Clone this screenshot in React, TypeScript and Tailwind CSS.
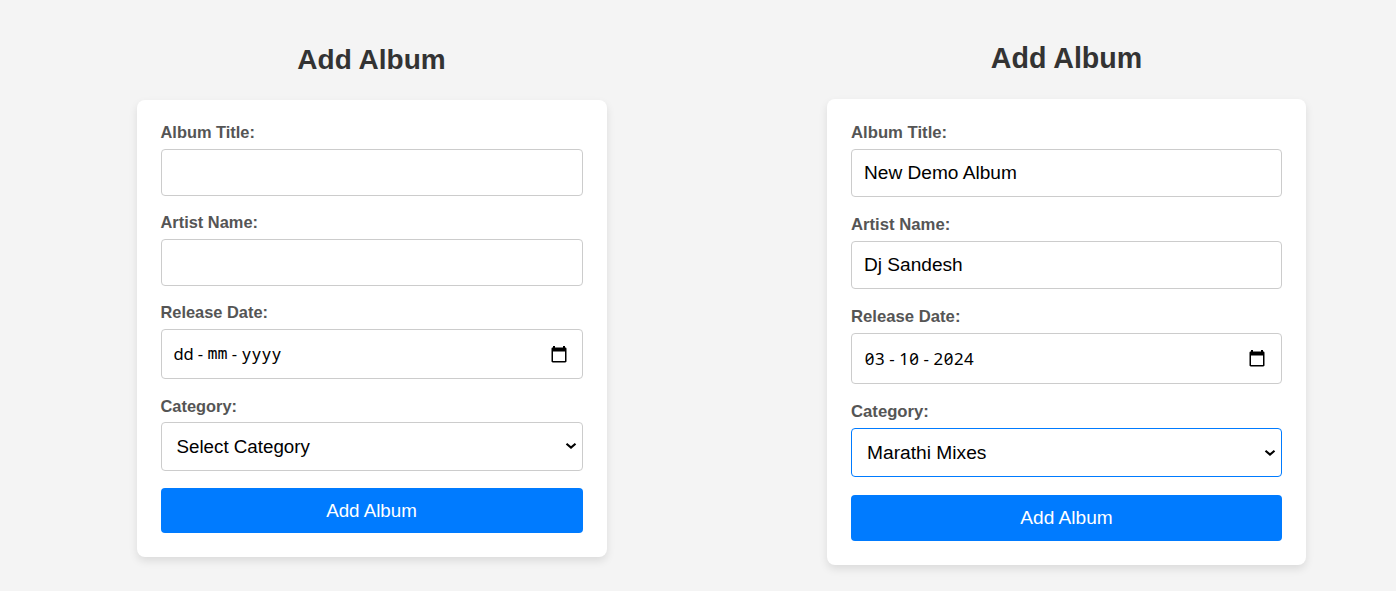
import type { ReactNode } from 'react';

function CalendarIcon() {
  return (
    <svg viewBox="0 0 16 17" className="h-[17px] w-4 shrink-0" fill="none">
      <path d="M2 0h2v1.500h8V0h2v1.500h.2c.8 0 1.300.5 1.300 1.300v12.400c0 .7-.5 1.200-1.300 1.200H1.800c-.8 0-1.300-.5-1.300-1.200V2.800C.5 2 1 1.500 1.800 1.500H2V0Zm0 5.500v9.500h12V5.500H2Z" fill="#000" />
    </svg>
  );
}

function ChevronIcon() {
  return (
    <svg viewBox="0 0 12 8" className="h-2 w-3 shrink-0" fill="none">
      <path d="M1.500 1.700 6 5.600l4.500-3.900" stroke="#000" strokeWidth="2.100" />
    </svg>
  );
}

function DateText({ parts, className, cell }: { parts: string[]; className: string; cell: string }) {
  return (
    <span className={`flex font-['Noto_Sans',sans-serif] [font-feature-settings:'zero'_1] ${className}`}>
      {parts.map((part, i) => (
        <span key={i} className="flex">
          {i > 0 && <span className="w-[14px] text-center">-</span>}
          {[...part].map((ch, j) => (
            <span key={j} className={`flex justify-center ${cell}`}>
              <span className={ch === 'm' ? "font-['DejaVu_Sans_Mono',monospace]" : ''}>{ch}</span>
            </span>
          ))}
        </span>
      ))}
    </span>
  );
}

function Label({ children, className }: { children: ReactNode; className: string }) {
  return <label className={`block font-bold text-[#555] ${className}`}>{children}</label>;
}

const box = 'flex w-full items-center rounded-[4px] border bg-white text-black outline-none';

function EmptyForm() {
  return (
    <section className="ml-[136.500px] w-[470px] shrink-0 pt-[42px]">
      <h1 className="h-[58px] text-center text-[28px] leading-[36px] font-bold text-[#333]">Add Album</h1>
      <form className="flex h-[457px] flex-col rounded-[8px] bg-white px-6 pt-[22px] shadow-[0_4px_8px_rgba(0,0,0,0.1)]">
        <Label className="h-[27px] text-[16.400px] leading-[20px]">Album Title:</Label>
        <input type="text" className={`${box} h-[47px] border-[#ccc] px-3 text-[18.750px]`} />
        <Label className="mt-4 h-[27px] text-[16.400px] leading-[20px]">Artist Name:</Label>
        <input type="text" className={`${box} h-[47px] border-[#ccc] px-3 text-[18.750px]`} />
        <Label className="mt-4 h-[27px] text-[16.400px] leading-[20px]">Release Date:</Label>
        <div className={`${box} h-[50px] justify-between border-[#ccc] pr-[15px] pl-3`}>
          <DateText parts={['dd', 'mm', 'yyyy']} className="pt-px text-[16.600px]" cell="w-[10px]" />
          <CalendarIcon />
        </div>
        <Label className="mt-[17px] h-[26px] text-[16.400px] leading-[20px]">Category:</Label>
        <div className={`${box} h-[48.500px] justify-between border-[#ccc] pr-[5px] pl-[15px] text-[18.750px]`}>
          <span className="pt-px">Select Category</span>
          <ChevronIcon />
        </div>
        <button type="button" className="mt-[17.500px] h-[45px] rounded-[4px] bg-[#007bff] pt-px text-[18.750px] text-white">Add Album</button>
      </form>
    </section>
  );
}

function FilledForm() {
  return (
    <section className="ml-[220.500px] w-[479px] shrink-0 pt-[40px]">
      <h1 className="h-[59px] text-center text-[28.600px] leading-[36px] font-bold text-[#333]">Add Album</h1>
      <form className="flex h-[466px] flex-col rounded-[8px] bg-white px-6 pt-6 shadow-[0_4px_8px_rgba(0,0,0,0.1)]">
        <Label className="h-[26px] text-[16.700px] leading-[20px]">Album Title:</Label>
        <input type="text" defaultValue="New Demo Album" className={`${box} h-[48px] border-[#ccc] px-3 text-[19.100px]`} />
        <Label className="mt-[18px] h-[26px] text-[16.700px] leading-[20px]">Artist Name:</Label>
        <input type="text" defaultValue="Dj Sandesh" className={`${box} h-[48px] border-[#ccc] px-3 text-[19.100px]`} />
        <Label className="mt-[18px] h-[26px] text-[16.700px] leading-[20px]">Release Date:</Label>
        <div className={`${box} h-[51px] justify-between border-[#ccc] pr-4 pl-3`}>
          <DateText parts={['03', '10', '2024']} className="pt-px pl-[0.500px] text-[16.900px]" cell="w-[10.200px]" />
          <CalendarIcon />
        </div>
        <Label className="mt-[18px] h-[26px] text-[16.700px] leading-[20px]">Category:</Label>
        <div className={`${box} h-[49px] justify-between border-[#007bff] pr-[5px] pl-[15px] text-[19.200px]`}>
          <span className="pt-px">Marathi Mixes</span>
          <ChevronIcon />
        </div>
        <button type="button" className="mt-[18px] h-[46px] rounded-[4px] bg-[#007bff] text-[19.100px] text-white">Add Album</button>
      </form>
    </section>
  );
}

export default function App() {
  return (
    <main className="flex h-[591px] w-[1396px] overflow-hidden bg-[#f4f4f4] font-['Liberation_Sans',Arial,sans-serif]">
      <EmptyForm />
      <FilledForm />
    </main>
  );
}
